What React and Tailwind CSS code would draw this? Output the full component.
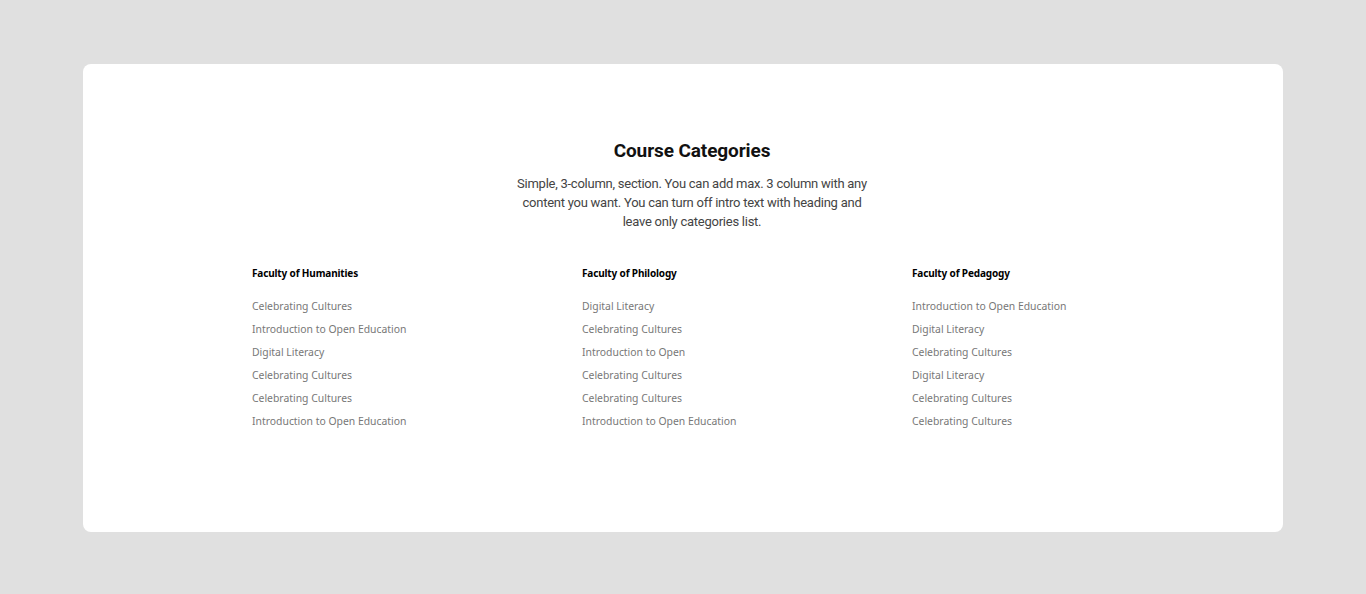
const cols = [
  { title: "Faculty of Humanities", items: ["Celebrating Cultures", "Introduction to Open Education", "Digital Literacy", "Celebrating Cultures", "Celebrating Cultures", "Introduction to Open Education"] },
  { title: "Faculty of Philology", items: ["Digital Literacy", "Celebrating Cultures", "Introduction to Open", "Celebrating Cultures", "Celebrating Cultures", "Introduction to Open Education"] },
  { title: "Faculty of Pedagogy", items: ["Introduction to Open Education", "Digital Literacy", "Celebrating Cultures", "Digital Literacy", "Celebrating Cultures", "Celebrating Cultures"] },
];

export default function App() {
  return (
    <div className="min-h-[594px] bg-[#e0e0e0] pt-[64px] px-[83px] pb-[62px]" style={{ fontFamily: 'Roboto, "Noto Sans", sans-serif' }}>
      <div className="bg-white rounded-[8px] h-[468px] pt-[73px]">
        <div className="pl-[18px]">
          <h2 className="text-center text-[19px] leading-[28px] font-bold text-[#111] tracking-[-0.1px]">Course Categories</h2>
          <p className="mx-auto mt-[9px] w-[370px] text-center text-[13px] leading-[19px] text-[#444] tracking-[-0.25px]">
            Simple, 3-column, section. You can add max. 3 column with any content you want. You can turn off intro text with heading and leave only categories list.
          </p>
        </div>
        <div className="mt-[34px] grid grid-cols-[202px_202px_202px] gap-x-[128px] justify-center" style={{ fontFamily: '"Noto Sans", Roboto, sans-serif' }}>
          {cols.map((c) => (
            <div key={c.title}>
              <h3 className="text-[10px] leading-[16px] font-bold text-black tracking-[-0.15px]">{c.title}</h3>
              <ul className="mt-[14px]">
                {c.items.map((it, i) => (
                  <li key={i} className="text-[10.4px] leading-[23px] text-[#777]">{it}</li>
                ))}
              </ul>
            </div>
          ))}
        </div>
      </div>
    </div>
  );
}
